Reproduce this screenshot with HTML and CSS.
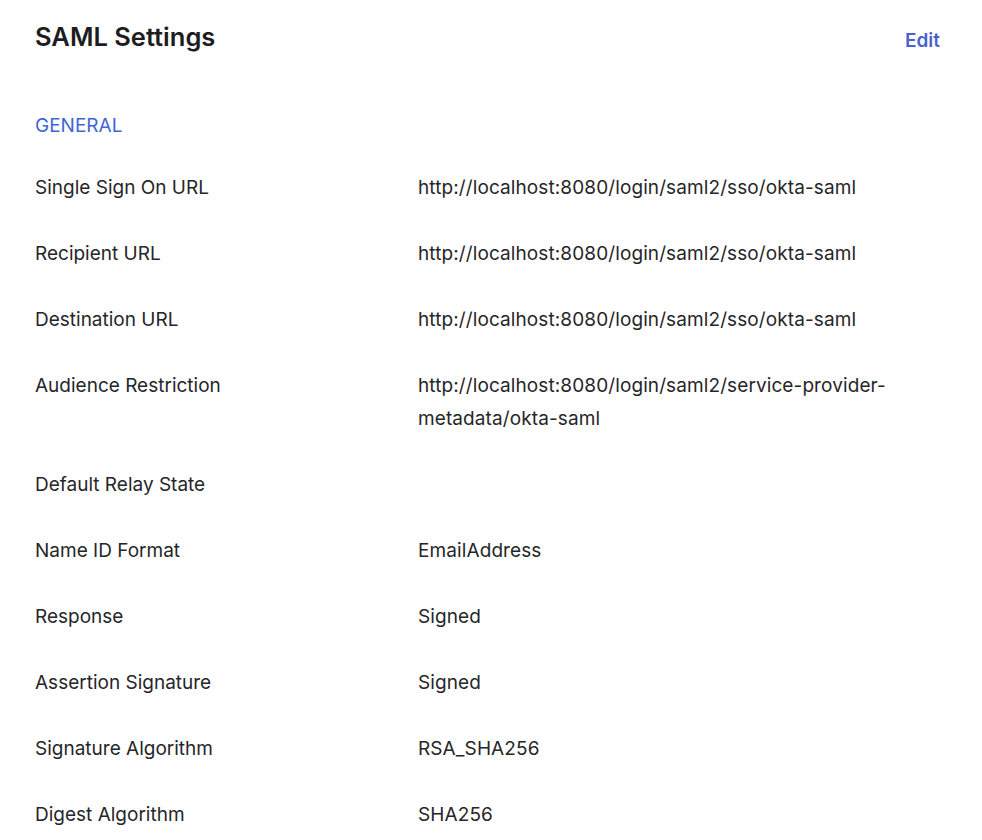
FILE: index.html
```html
<!DOCTYPE html>
<html>
<head>
<meta charset="utf-8">
<link rel="stylesheet" href="styles.css">
</head>
<body>
<div class="panel">
  <div class="header">
    <h1 class="title">SAML Settings</h1>
    <a class="edit">Edit</a>
  </div>
  <div class="section">GENERAL</div>
  <dl class="rows">
    <dt>Single Sign On URL</dt><dd>http://localhost:8080/login/saml2/sso/okta-saml</dd>
    <dt>Recipient URL</dt><dd>http://localhost:8080/login/saml2/sso/okta-saml</dd>
    <dt>Destination URL</dt><dd>http://localhost:8080/login/saml2/sso/okta-saml</dd>
    <dt>Audience Restriction</dt><dd>http://localhost:8080/login/saml2/service-provider-metadata/okta-saml</dd>
    <dt>Default Relay State</dt><dd></dd>
    <dt>Name ID Format</dt><dd>EmailAddress</dd>
    <dt>Response</dt><dd>Signed</dd>
    <dt>Assertion Signature</dt><dd>Signed</dd>
    <dt>Signature Algorithm</dt><dd>RSA_SHA256</dd>
    <dt>Digest Algorithm</dt><dd>SHA256</dd>
  </dl>
</div>
</body>
</html>
```
FILE: styles.css
```css
html, body {
  margin: 0;
  background: #ffffff;
}
body {
  font-family: Inter, "Noto Sans", sans-serif;
  color: #1d1d21;
}
.panel {
  padding: 21px 42px 0 35px;
}
.header {
  display: flex;
  justify-content: space-between;
  align-items: flex-start;
}
.title {
  margin: 0;
  font-size: 25.5px;
  line-height: 32px;
  font-weight: 600;
  color: #1d1d21;
}
.edit {
  font-size: 19px;
  font-weight: 600;
  line-height: 26px;
  color: #4b5fd1;
  margin-top: 7px;
  cursor: pointer;
}
.section {
  margin-top: 55px;
  font-size: 19px;
  line-height: 33px;
  color: #3f66d6;
}
.rows {
  margin: 29px 0 0 0;
  display: grid;
  grid-template-columns: 383px 1fr;
  row-gap: 33px;
  font-size: 19px;
  line-height: 33px;
  color: #262629;
}
.rows dt, .rows dd {
  margin: 0;
  min-height: 33px;
}
.rows dd {
  padding-right: 30px;
  letter-spacing: 0.1px;
}
```
